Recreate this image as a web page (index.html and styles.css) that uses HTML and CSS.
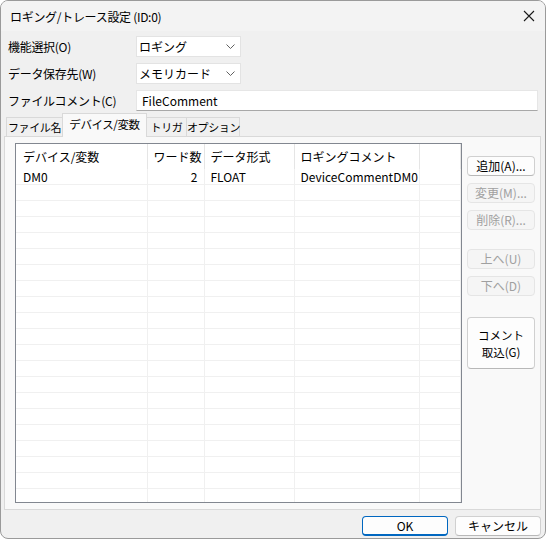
FILE: index.html
```
<!DOCTYPE html>
<html lang="ja">
<head>
    <meta charset="UTF-8">
    <title>ロギング/トレース設定</title>
    <link rel="stylesheet" href="styles.css">
</head>
<body>
<div class="dialog">
    <div class="titlebar">
        <span class="title">ロギング/トレース設定 (ID:0)</span>
        <svg class="close" width="12" height="12" viewBox="0 0 12 12">
            <path d="M1 1 L11 11 M11 1 L1 11" stroke="#1a1a1a" stroke-width="1.1" fill="none"/>
        </svg>
    </div>

    <div class="form">
        <label>機能選択(O)</label>
        <div class="combo"><span>ロギング</span>
            <svg width="9" height="5" viewBox="0 0 9 5"><path d="M0.5 0.5 L4.5 4.5 L8.5 0.5" stroke="#606060" fill="none"/></svg>
        </div>
        <label>データ保存先(W)</label>
        <div class="combo"><span>メモリカード</span>
            <svg width="9" height="5" viewBox="0 0 9 5"><path d="M0.5 0.5 L4.5 4.5 L8.5 0.5" stroke="#606060" fill="none"/></svg>
        </div>
        <label>ファイルコメント(C)</label>
        <div class="textbox">FileComment</div>
    </div>

    <div class="tabs">
        <div class="tab t1">ファイル名</div>
        <div class="tab t2 active">デバイス/変数</div>
        <div class="tab t3">トリガ</div>
        <div class="tab t4">オプション</div>
    </div>

    <div class="panel">
        <div class="list">
            <table>
                <colgroup>
                    <col style="width:131px"><col style="width:57px"><col style="width:90px"><col style="width:125px"><col>
                </colgroup>
                <thead>
                    <tr><th>デバイス/変数</th><th class="num">ワード数</th><th>データ形式</th><th>ロギングコメント</th><th></th></tr>
                </thead>
                <tbody id="rows">
                    <tr><td>DM0</td><td class="num">2</td><td>FLOAT</td><td>DeviceCommentDM0</td><td></td></tr>
                </tbody>
            </table>
        </div>
        <div class="side">
            <button class="btn add">追加(A)...</button>
            <button class="btn off">変更(M)...</button>
            <button class="btn off">削除(R)...</button>
            <button class="btn off up">上へ(U)</button>
            <button class="btn off">下へ(D)</button>
            <button class="btn tall">コメント<br>取込(G)</button>
        </div>
    </div>

    <div class="footer">
        <button class="btn ok">OK</button>
        <button class="btn">キャンセル</button>
    </div>
</div>

<script>
    // 空の行を埋める
    var body = document.getElementById('rows');
    for (var i = 0; i < 21; i++) {
        var tr = document.createElement('tr');
        tr.innerHTML = '<td></td><td></td><td></td><td></td><td></td>';
        body.appendChild(tr);
    }
</script>
</body>
</html>
```

FILE: styles.css
```
html,
body {
    margin: 0;
    padding: 0;
}

body {
    font-family: "Noto Sans CJK JP", "Liberation Sans", sans-serif;
    font-size: 12px;
    color: #000;
    background: #fff;
}

.dialog {
    width: 546px;
    height: 539px;
    box-sizing: border-box;
    border: 1px solid #9a9a9a;
    border-radius: 8px;
    background: #f0f0f0;
    overflow: hidden;
}

.titlebar {
    height: 30px;
    background: #f3f3f3;
    display: flex;
    align-items: center;
    justify-content: space-between;
    padding: 0 9px 0 9px;
}

.title {
    line-height: 14px;
    padding-top: 1px;
    letter-spacing: -0.3px;
}

.close {
    margin-right: 1px;
}

.form {
    display: grid;
    grid-template-columns: 128px 105px 1fr;
    row-gap: 6px;
    padding: 5px 7px 0 7px;
}

.form label {
    line-height: 21px;
    grid-column: 1;
    letter-spacing: -0.3px;
}

.combo {
    height: 21px;
    box-sizing: border-box;
    background: #fff;
    border: 1px solid #e3e3e3;
    display: flex;
    align-items: center;
    justify-content: space-between;
    padding: 0 5px 0 2px;
    line-height: 19px;
}

.textbox {
    grid-column: 2 / 4;
    height: 21px;
    box-sizing: border-box;
    background: #fff;
    border: 1px solid #e6e6e6;
    border-bottom-color: #a8a8a8;
    padding: 0 5px;
    line-height: 19px;
}

.tabs {
    display: flex;
    align-items: flex-end;
    height: 24px;
    padding-left: 5px;
    margin-top: 1px;
}

.tab {
    height: 19px;
    box-sizing: border-box;
    border: 1px solid #d9d9d9;
    border-bottom: none;
    background: #f0f0f0;
    line-height: 18px;
    padding: 0;
    text-align: center;
    font-size: 11px;
    letter-spacing: -0.4px;
    white-space: nowrap;
    margin-right: -1px;
}

.t1 { width: 57px; }
.t2 { width: 85px; }
.t3 { width: 41px; }
.t4 { width: 54px; }

.tab.active {
    height: 24px;
    background: #f9f9f9;
    line-height: 21px;
    font-size: 11.5px;
    margin-bottom: -1px;
    position: relative;
    z-index: 1;
}

.panel {
    margin: 0 4px 0 3px;
    height: 374px;
    box-sizing: border-box;
    border: 1px solid #d9d9d9;
    background: #f9f9f9;
    display: flex;
    padding: 6px 0 0 10px;
}

.list {
    width: 447px;
    height: 360px;
    box-sizing: border-box;
    border: 1px solid #828790;
    background: #fff;
    overflow: hidden;
}

.list table {
    border-collapse: collapse;
    table-layout: fixed;
    width: 445px;
}

.list th {
    font-weight: normal;
    text-align: left;
    height: 24px;
    padding: 0 6px 1px 6px;
    border-right: 1px solid #e5e5e5;
    white-space: nowrap;
}

.list td {
    height: 15px;
    padding: 0 6px;
    line-height: 15px;
    border-right: 1px solid #f0f0f0;
    border-bottom: 1px solid #f0f0f0;
    white-space: nowrap;
    overflow: hidden;
}

.list th:first-child,
.list td:first-child {
    padding-left: 7px;
}

.list .num {
    text-align: right;
}

.side {
    display: flex;
    flex-direction: column;
    margin-left: 5px;
    width: 68px;
    padding-top: 13px;
}

.btn {
    font-family: inherit;
    font-size: 12px;
    height: 20px;
    padding: 0;
    margin: 0;
    background: #fdfdfd;
    border: 1px solid #d0d0d0;
    border-bottom-color: #b8b8b8;
    border-radius: 4px;
    color: #000;
    line-height: 16px;
}

.side .btn {
    margin-bottom: 7px;
}

.btn.off {
    background: #f5f5f5;
    border-color: #e5e5e5;
    color: #a0a0a0;
}

.btn.up {
    margin-top: 12px;
}

.btn.tall {
    height: 52px;
    margin-top: 14px;
    font-size: 11.5px;
    line-height: 17px;
    padding-top: 1px;
}

.footer {
    display: flex;
    justify-content: flex-end;
    gap: 7px;
    padding: 6px 4px 0 0;
}

.footer .btn {
    width: 86px;
}

.btn.ok {
    border: 1px solid #0067c0;
    border-bottom-width: 2px;
}
```
